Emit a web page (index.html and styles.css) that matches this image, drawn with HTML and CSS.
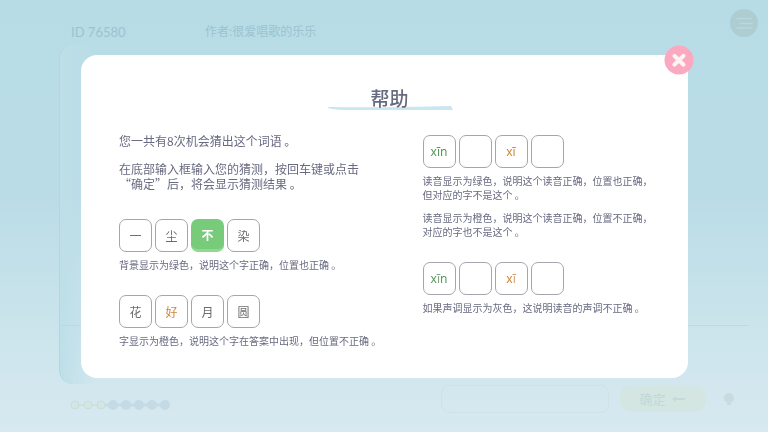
FILE: index.html
```html
<!DOCTYPE html>
<html lang="zh-CN">
<head>
<meta charset="utf-8">
<meta name="viewport" content="width=device-width, initial-scale=1">
<title>帮助</title>
<link rel="stylesheet" href="styles.css">
</head>
<body>
<div class="game">
  <header class="bar">
    <span class="bar-id">ID 76580</span>
    <span class="bar-author">作者:很爱唱歌的乐乐</span>
    <button class="menu" type="button" aria-label="菜单">
      <svg viewBox="0 0 28 28" width="28" height="28"><circle cx="14" cy="14" r="14" fill="#aecdd3"/><path d="M7 9.500H21M10 14.500H22M7 19H21" stroke="#b9d7dc" stroke-width="1.500" stroke-linecap="round"/></svg>
    </button>
  </header>
  <main class="board"><div class="board-line"></div></main>
  <footer class="foot">
    <svg class="chances" viewBox="0 0 100 10" width="100" height="10">
      <path d="M5 5H31" stroke="#cfe2dc" stroke-width="2"/>
      <path d="M31 5H95" stroke="#c5dbe5" stroke-width="3"/>
      <g fill="#d3e6e3" stroke="#c9dedb"><circle cx="5" cy="5" r="4"/><circle cx="18" cy="5" r="4"/><circle cx="31" cy="5" r="4"/></g>
      <g fill="#c4dae5"><circle cx="43" cy="5" r="5"/><circle cx="56" cy="5" r="5"/><circle cx="69" cy="5" r="5"/><circle cx="82" cy="5" r="5"/><circle cx="95" cy="5" r="5"/></g>
    </svg>
    <input class="guess" type="text" aria-label="猜测">
    <button class="confirm" type="button">确定 <svg viewBox="0 0 16 8" width="16" height="8"><path d="M1 4L5 1V3H14V5H5V7Z" fill="#c5dad8"/></svg></button>
    <svg class="hint" viewBox="0 0 14 14" width="14" height="14"><circle cx="7" cy="6" r="5" fill="#c8dcdf"/><path d="M5 11H9V13H5Z" fill="#c8dcdf"/></svg>
  </footer>
</div>

<div class="overlay">
  <section class="dialog" role="dialog" aria-labelledby="help-title">
    <button class="close" type="button" aria-label="关闭">
      <svg viewBox="0 0 30 30" width="30" height="30"><circle cx="15" cy="15" r="14.500" fill="#fba9c0"/><path d="M10.300 10.800L19.500 19.700M19.500 10.800L10.300 19.700" stroke="#fff3f4" stroke-width="4" stroke-linecap="round"/></svg>
    </button>
    <h1 class="title" id="help-title">
      <svg class="swash" viewBox="0 0 126 5" width="126" height="5"><path d="M1 1Q50 2 124 0L126 4L22 4Q8 4 1 2Z" fill="#c9e6f1"/></svg>
      <span class="title-text">帮助</span>
    </h1>
    <div class="columns">
      <div class="column">
        <p class="lead">您一共有8次机会猜出这个词语 。</p>
        <p class="lead">在底部输入框输入您的猜测，按回车键或点击<br>“确定”后，将会显示猜测结果 。</p>
        <div class="tiles tiles-first">
          <span class="tile">一</span><span class="tile">尘</span><span class="tile tile-hit">不</span><span class="tile">染</span>
        </div>
        <p class="note">背景显示为绿色，说明这个字正确，位置也正确 。</p>
        <div class="tiles">
          <span class="tile">花</span><span class="tile orange">好</span><span class="tile">月</span><span class="tile">圆</span>
        </div>
        <p class="note">字显示为橙色，说明这个字在答案中出现，但位置不正确 。</p>
      </div>
      <div class="column column-pinyin">
        <div class="tiles">
          <span class="tile pinyin green">xīn</span><span class="tile"></span><span class="tile pinyin orange">xī</span><span class="tile"></span>
        </div>
        <p class="note">读音显示为绿色，说明这个读音正确，位置也正确，<br>但对应的字不是这个 。</p>
        <p class="note note-next">读音显示为橙色，说明这个读音正确，位置不正确，<br>对应的字也不是这个 。</p>
        <div class="tiles">
          <span class="tile pinyin green">x<span class="tone">ī</span>n</span><span class="tile"></span><span class="tile pinyin orange">x<span class="tone">ī</span></span><span class="tile"></span>
        </div>
        <p class="note">如果声调显示为灰色，这说明读音的声调不正确 。</p>
      </div>
    </div>
  </section>
</div>
</body>
</html>
```
FILE: styles.css
```css
* { box-sizing: border-box; }

body {
  margin: 0;
  font-family: "Noto Sans CJK SC", sans-serif;
  color: #686a80;
  background: #b9dce6;
}

button {
  border: 0;
  padding: 0;
  background: none;
  font: inherit;
}

svg { display: block; }

.game {
  display: flex;
  flex-direction: column;
  min-height: 100vh;
  background: linear-gradient(#b8dce6 0%, #badce6 45%, #cde5ed 80%, #d8e9f0 100%);
}

.bar {
  display: flex;
  align-items: center;
  height: 45px;
  padding: 0 10px 0 71px;
  font-size: 12px;
  line-height: 16px;
  color: #9bc3d1;
}

.bar-id {
  width: 134px;
  padding-top: 18px;
  font-family: Lato, sans-serif;
  font-size: 13px;
}

.bar-author { padding-top: 17px; }

.menu {
  margin-left: auto;
}

.board {
  flex: 1;
  display: flex;
  align-items: flex-end;
  margin: 0 20px 0 59px;
  padding-bottom: 58px;
  border-left: 1px solid #b3d7e1;
  border-radius: 14px;
  background: linear-gradient(90deg, #bedfe8, transparent 5%);
}

.board-line {
  width: 100%;
  border-top: 1px solid #bcd9e3;
}

.foot {
  display: flex;
  align-items: center;
  height: 48px;
  padding: 0 32px 19px 70px;
}

.chances { margin-top: 13px; }

.guess {
  width: 168px;
  height: 28px;
  margin-left: auto;
  border: 1px solid #cde2e9;
  border-radius: 8px;
  background: transparent;
}

.confirm {
  display: flex;
  align-items: center;
  justify-content: center;
  gap: 5px;
  width: 86px;
  height: 27px;
  margin: 0 16px 0 11px;
  border-radius: 12px;
  background: #d3e6e1;
  color: #c2d8d8;
  font-size: 13px;
}

.overlay {
  position: fixed;
  inset: 0;
  padding: 55px 80px 54px 81px;
}

.dialog {
  position: relative;
  min-height: 100%;
  padding-top: 30px;
  border-radius: 16px;
  background: #fff;
}

.close {
  position: absolute;
  top: -10px;
  right: -6px;
}

.title {
  display: grid;
  justify-items: center;
  align-items: end;
  margin: 0;
  padding-left: 10px;
  font-size: 19px;
  font-weight: 500;
  line-height: 26px;
}

.title-text, .swash { grid-area: 1 / 1; }

.columns {
  display: grid;
  grid-template-columns: 1fr 1fr;
  margin-top: 22px;
}

.column {
  padding-left: 38px;
  white-space: nowrap;
}

.column-pinyin { padding-top: 2px; }

.lead {
  margin: 0 0 13px;
  font-size: 12px;
  line-height: 15px;
}

.note {
  margin: 6px 0 0;
  font-size: 10px;
  line-height: 14px;
}

.note-next { margin-top: 9px; }

.tiles {
  display: flex;
  gap: 3px;
}

.tiles-first { margin-top: 28px; }

.note + .tiles { margin-top: 23px; }

.tile {
  display: flex;
  align-items: center;
  justify-content: center;
  width: 33px;
  height: 33px;
  border: 1px solid #a5a5ae;
  border-radius: 7px;
  font-size: 12px;
  color: #6c6c70;
}

.tile-hit {
  border: 0;
  border-bottom: 3px solid #90d991;
  background: #78cb7b;
  color: #fff;
  font-weight: 700;
}

.pinyin {
  font-family: "Noto Sans", sans-serif;
  font-size: 12px;
}

.green { color: #549858; }

.orange { color: #d18634; }

.green .tone { color: #80a582; }

.orange .tone { color: #ce9f6d; }
```
